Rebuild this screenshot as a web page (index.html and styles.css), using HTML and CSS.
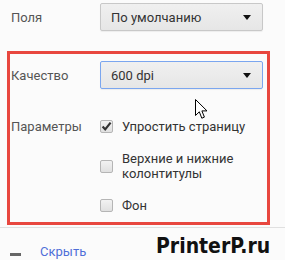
FILE: index.html
```html
<!DOCTYPE html>
<html>
<head>
<meta charset="utf-8">
<link rel="stylesheet" href="styles.css">
</head>
<body>
<div class="page">
  <div class="row top-row">
    <div class="label">Поля</div>
    <div class="select"><span>По умолчанию</span><span class="arrow"></span></div>
  </div>
  <div class="highlight">
    <div class="row">
      <div class="label">Качество</div>
      <div class="select focused"><span>600 dpi</span><span class="arrow"></span></div>
    </div>
    <div class="row params">
      <div class="label">Параметры</div>
      <div class="options">
        <div class="option">
          <span class="checkbox checked">
            <svg width="11" height="11" viewBox="0 0 11 11"><path d="M1.6 5.6 L4.2 8.4 L9.6 1.6" fill="none" stroke="#333" stroke-width="2.2"/></svg>
          </span>
          <span class="opt-text">Упростить страницу</span>
        </div>
        <div class="option">
          <span class="checkbox"></span>
          <span class="opt-text">Верхние и нижние<br>колонтитулы</span>
        </div>
        <div class="option">
          <span class="checkbox"></span>
          <span class="opt-text">Фон</span>
        </div>
      </div>
    </div>
  </div>
  <div class="footer">
    <span class="minus"></span>
    <span class="hide-link">Скрыть</span>
  </div>
  <div class="watermark">PrinterP.ru</div>
  <svg class="cursor" width="13" height="21" viewBox="0 0 13 21">
    <path d="M0.5 0.5 L0.5 16.5 L4.3 12.8 L6.8 19.2 L9.4 18.1 L6.9 11.9 L12 11.9 Z" fill="#fff" stroke="#000" stroke-width="1"/>
  </svg>
</div>
</body>
</html>
```
FILE: styles.css
```css
html, body {
  margin: 0;
  padding: 0;
}
body {
  background: #fbfbfb;
  font-family: Roboto, "Noto Sans", sans-serif;
  font-size: 13px;
  color: #333;
}
.page {
  position: relative;
  width: 285px;
  height: 260px;
  overflow: hidden;
}
.row {
  display: flex;
  align-items: center;
}
.top-row {
  padding: 3px 0 0 11px;
}
.label {
  width: 89px;
  color: #555;
}
.select {
  box-sizing: border-box;
  width: 163px;
  height: 28px;
  border: 1px solid #c8c8c8;
  border-radius: 2px;
  background: linear-gradient(#f0f0f0, #e6e6e6);
  box-shadow: 0 1px 1px rgba(0,0,0,0.06);
  display: flex;
  align-items: center;
  justify-content: space-between;
  padding: 0 11px 0 10px;
  color: #333;
  font-size: 13px;
}
.select.focused {
  border-color: #7ba6ef;
}
.arrow {
  width: 0;
  height: 0;
  border-left: 4.5px solid transparent;
  border-right: 4.5px solid transparent;
  border-top: 5px solid #111;
}
.highlight {
  box-sizing: border-box;
  margin: 20px 0 0 7px;
  width: 263px;
  height: 174px;
  border: 3px solid #e8473f;
  padding: 7px 0 0 1px;
}
.params {
  align-items: flex-start;
  margin-top: 30px;
}
.options {
  display: flex;
  flex-direction: column;
  gap: 17px;
}
.option {
  display: flex;
  align-items: center;
  gap: 9px;
}
.checkbox {
  box-sizing: border-box;
  width: 13px;
  height: 13px;
  border: 1px solid #b5b5b5;
  border-radius: 2px;
  background: linear-gradient(#f2f2f2, #e0e0e0);
  display: flex;
  align-items: center;
  justify-content: center;
  flex: none;
}
.opt-text {
  font-size: 13px;
  line-height: 15px;
  color: #333;
}
.footer {
  margin-top: 2px;
  border-top: 1px solid #e0e0e0;
  height: 40px;
  display: flex;
  align-items: flex-start;
  padding-top: 16px;
  padding-left: 10px;
  box-sizing: border-box;
}
.minus {
  width: 11px;
  height: 3px;
  background: #666;
  margin-top: 9px;
}
.hide-link {
  margin-left: 19px;
  color: #4f6fd8;
  font-size: 13px;
}
.watermark {
  position: absolute;
  left: 156px;
  top: 234px;
  font-family: "DejaVu Sans", sans-serif;
  font-stretch: condensed;
  font-weight: 900;
  font-size: 21px;
  color: #111;
}
.cursor {
  position: absolute;
  left: 195px;
  top: 99px;
}
```
